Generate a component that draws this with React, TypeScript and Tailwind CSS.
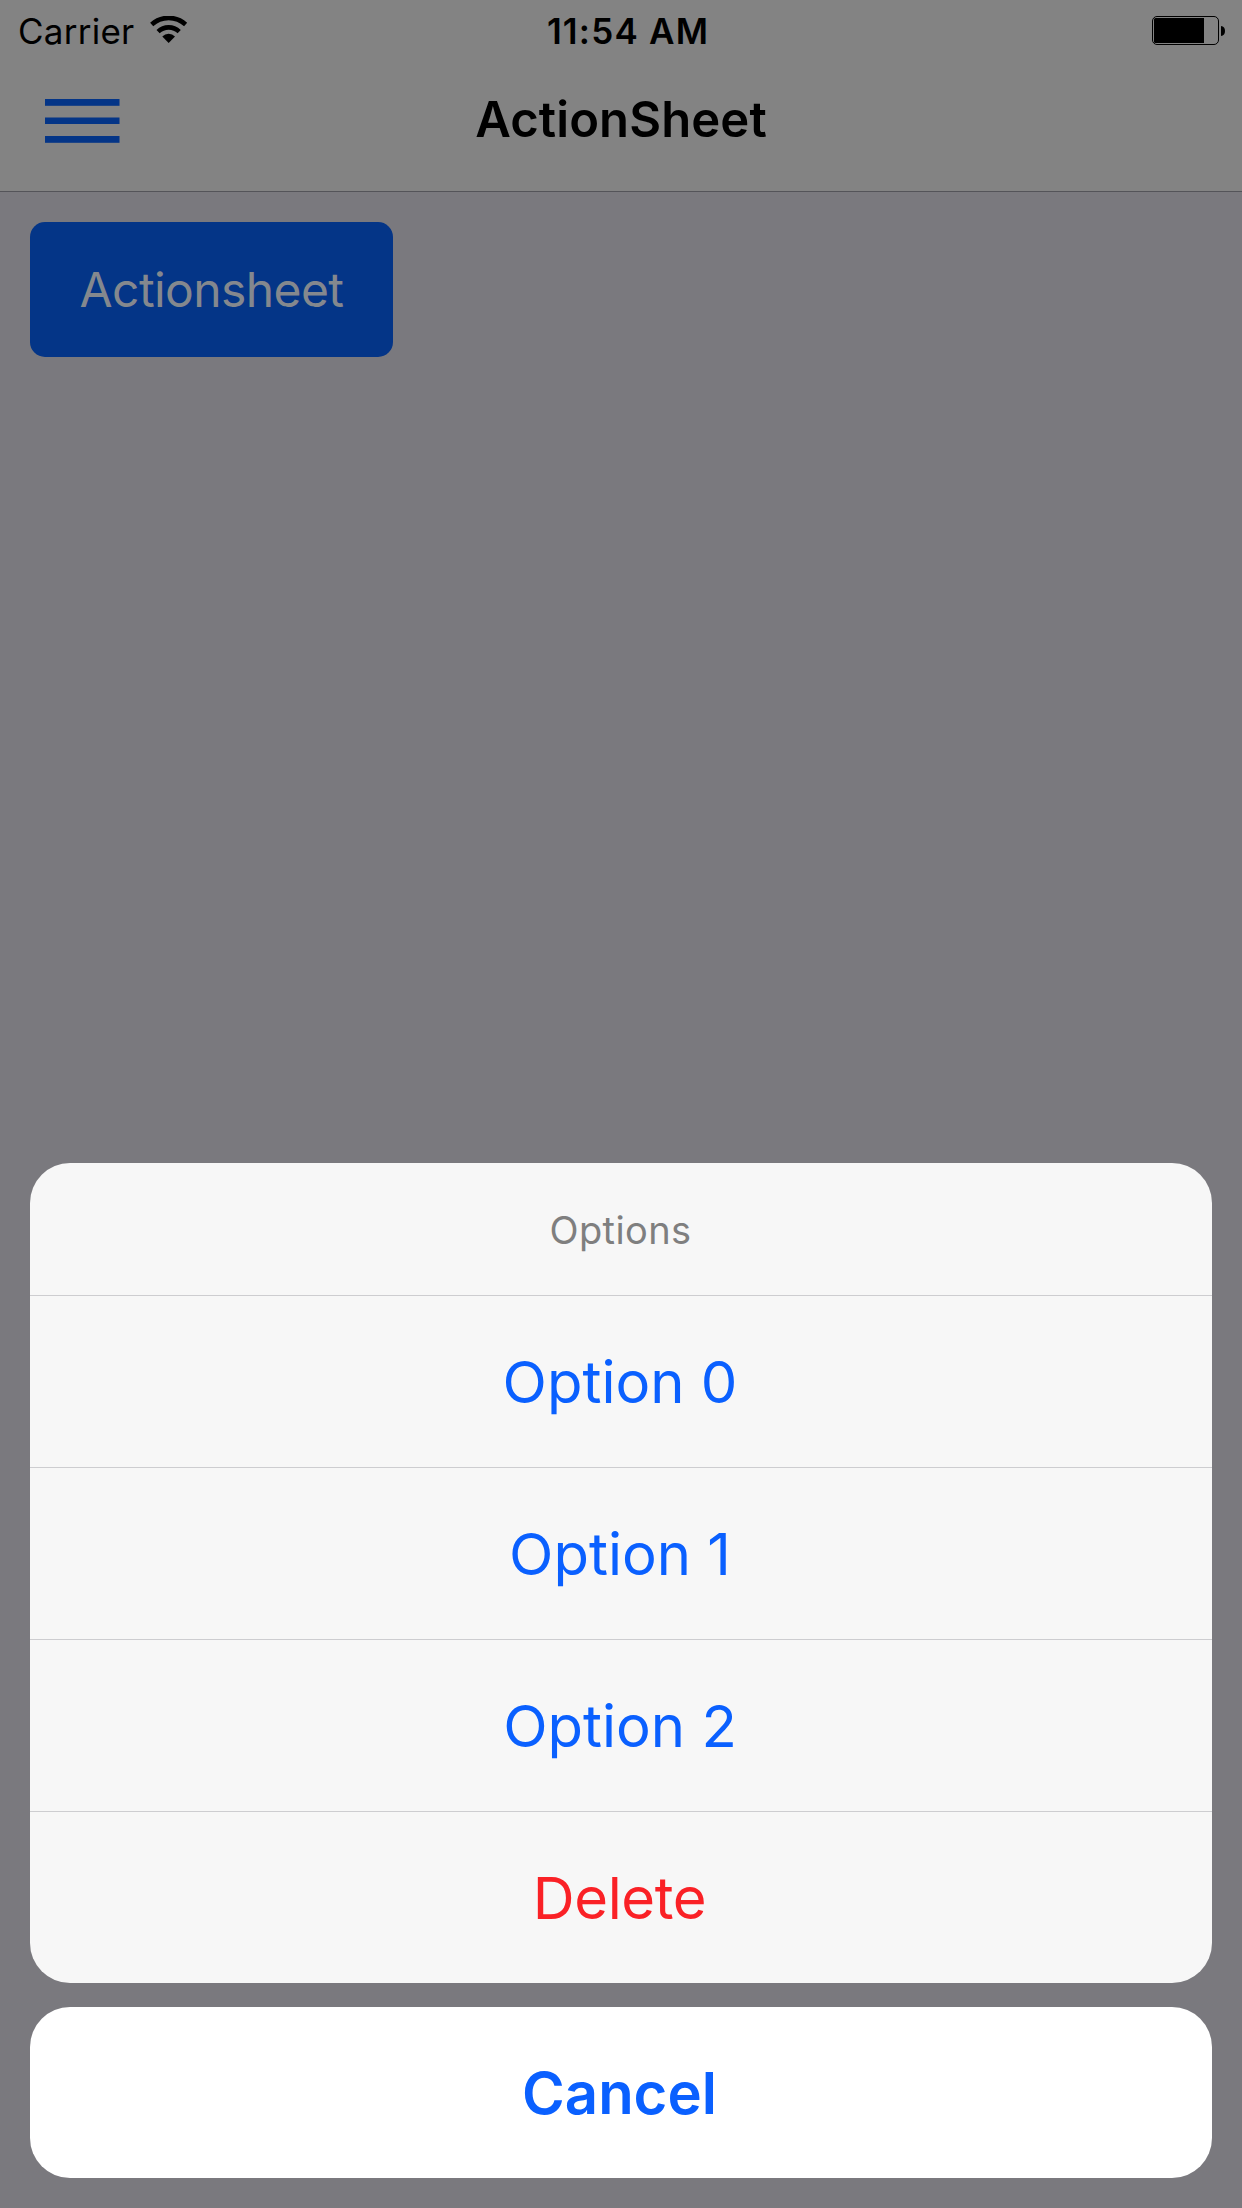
import { useState } from 'react';

type SheetButton = {
  label: string;
  destructive?: boolean;
};

const buttons: SheetButton[] = [
  { label: 'Option 0' },
  { label: 'Option 1' },
  { label: 'Option 2' },
  { label: 'Delete', destructive: true },
];

function WifiIcon() {
  return (
    <svg width="38" height="28" viewBox="0 0 38 28" fill="none" stroke="black">
      <path d="M1.7 8.5a25 25 0 0 1 33.9 0" strokeWidth="4.6" />
      <path d="M8.1 15.6a15.4 15.4 0 0 1 21.1 0" strokeWidth="4.6" />
      <path d="M18.65 27 12.3 20.4a9 9 0 0 1 12.7 0Z" fill="black" stroke="none" />
    </svg>
  );
}

function BatteryIcon() {
  return (
    <svg width="73" height="29" viewBox="0 0 73 29" fill="none">
      <rect x="0.5" y="0.5" width="66" height="28" rx="4.5" stroke="black" />
      <rect x="2" y="2" width="50" height="25" rx="1.5" fill="black" />
      <rect x="46" y="2" width="6" height="25" fill="black" />
      <path d="M69 10c2.6 0 4 2.2 4 5s-1.4 5-4 5Z" fill="black" />
    </svg>
  );
}

function MenuIcon() {
  return (
    <svg width="75" height="45" viewBox="0 0 75 45" fill="#043587">
      <rect width="74.5" height="6.8" />
      <rect y="18.5" width="74.5" height="6.5" />
      <rect y="37" width="74.5" height="6.8" />
    </svg>
  );
}

export default function App() {
  const [open, setOpen] = useState(true);

  return (
    <div className="flex h-[2208px] w-[1242px] flex-col overflow-hidden bg-[#7a797e] font-['Inter',sans-serif] text-black">
      {/* Header */}
      <header className="h-48 border-b border-[#545459] bg-[#838383]">
        <div className="grid h-[62px] grid-cols-[1fr_auto_1fr] items-center pr-[17px] pl-[18px]">
          <div className="flex items-center text-[35px] leading-none tracking-[0.25px]">
            <span>Carrier</span>
            <span className="-mt-0.5 ml-4">
              <WifiIcon />
            </span>
          </div>
          <span className="pl-[13px] text-[35px] leading-none font-semibold tracking-[1.2px]">
            11:54 AM
          </span>
          <span className="mb-px justify-self-end">
            <BatteryIcon />
          </span>
        </div>
        <div className="grid h-[115px] grid-cols-[1fr_auto_1fr] items-center px-[45px]">
          <button aria-label="Menu" className="mt-[3px] justify-self-start">
            <MenuIcon />
          </button>
          <h1 className="text-[49px] leading-none font-semibold tracking-[0.1px]">
            ActionSheet
          </h1>
        </div>
      </header>

      {/* Content */}
      <main className="flex-1 px-[30px] pt-[30px]">
        <button
          onClick={() => setOpen(true)}
          className="flex h-[135px] w-[363px] items-center justify-center rounded-[15px] bg-[#043587] text-[48px] leading-none tracking-[-0.6px] text-[#84888e]"
        >
          Actionsheet
        </button>
      </main>

      {/* Action sheet */}
      {open && (
        <section className="flex flex-col gap-6 px-[30px] pb-[30px] text-[58px]">
          <div className="overflow-hidden rounded-[40px] bg-[#f7f7f7]">
            <h2 className="flex h-[133px] items-center justify-center border-b border-[#cdcdd0] pt-[2px] pr-px text-[38px] leading-none tracking-[0.4px] text-[#7f7f7f]">
              Options
            </h2>
            {buttons.map(({ label, destructive }) => (
              <button
                key={label}
                onClick={() => setOpen(false)}
                className={
                  destructive
                    ? 'flex h-[171px] w-full items-center justify-center pr-[3px] leading-none tracking-[-0.4px] text-[#fa2126]'
                    : 'flex h-[172px] w-full items-center justify-center border-b border-[#cdcdd0] pr-[2px] leading-none text-[#0a60ff]'
                }
              >
                {label}
              </button>
            ))}
          </div>
          <button
            onClick={() => setOpen(false)}
            className="flex h-[171px] items-center justify-center rounded-[40px] bg-white pr-[3px] leading-none font-semibold text-[#0a60ff]"
          >
            Cancel
          </button>
        </section>
      )}
    </div>
  );
}
